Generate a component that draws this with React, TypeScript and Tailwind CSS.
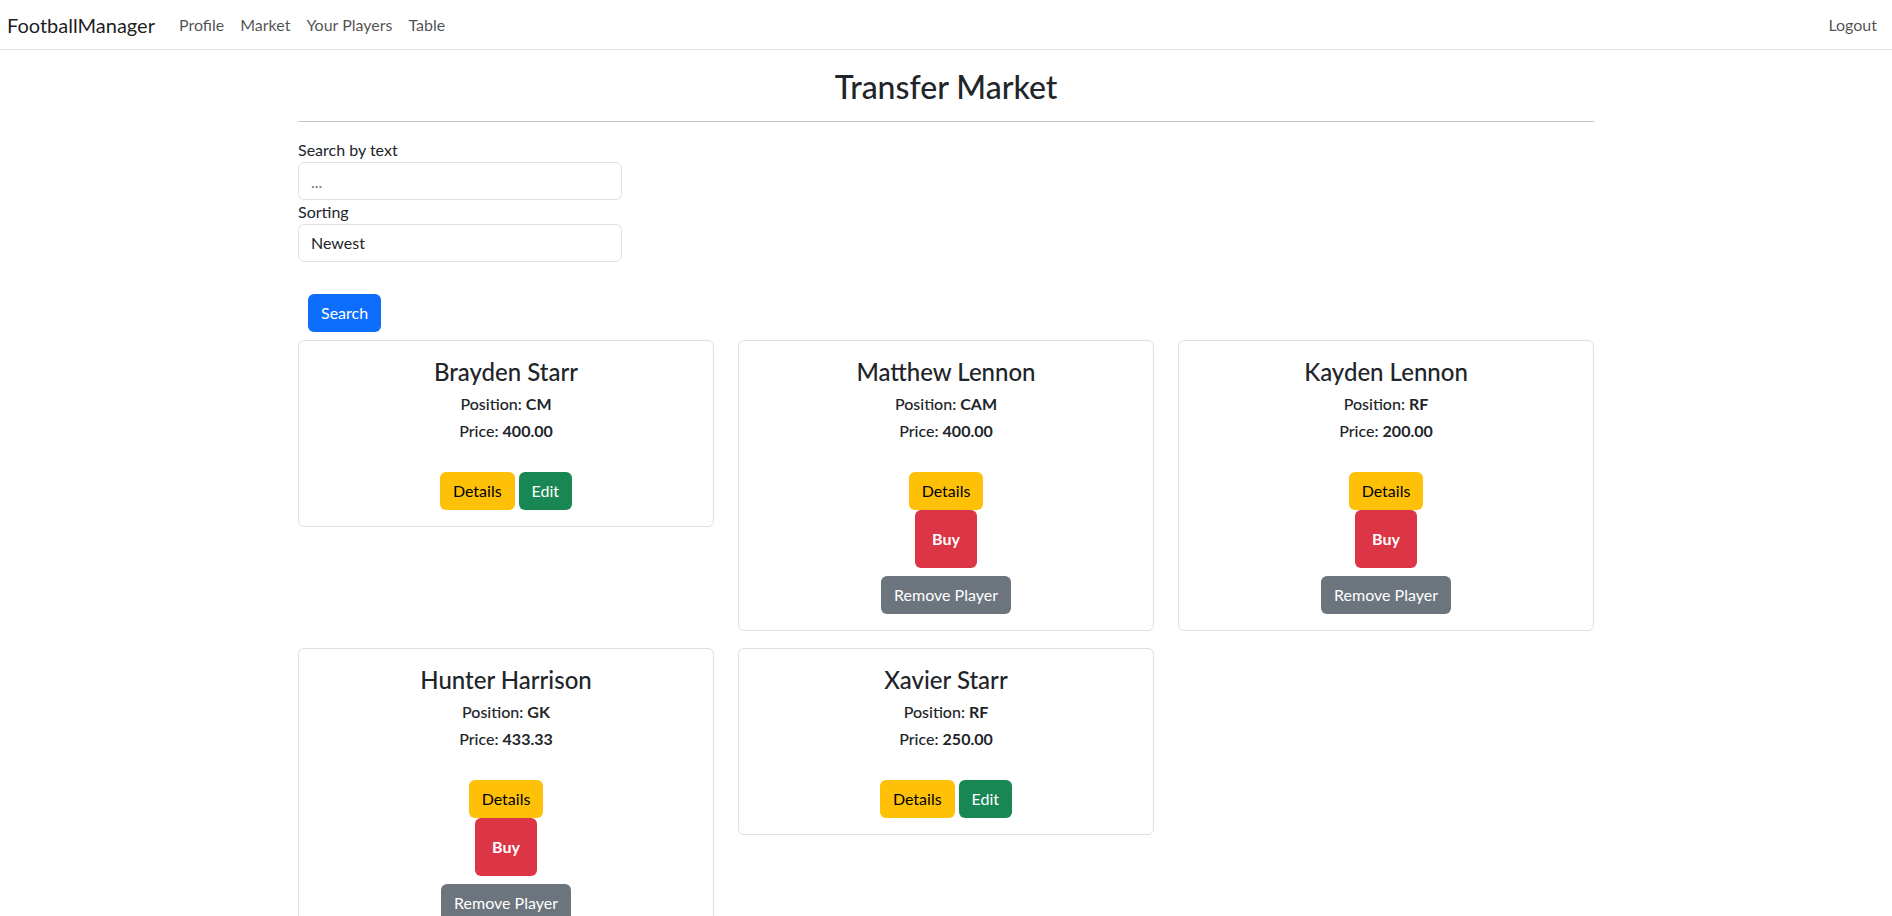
import React from 'react';

interface Player {
  name: string;
  position: string;
  price: string;
  owned: boolean;
}

const PLAYERS: Player[] = [
  { name: 'Brayden Starr', position: 'CM', price: '400.00', owned: true },
  { name: 'Matthew Lennon', position: 'CAM', price: '400.00', owned: false },
  { name: 'Kayden Lennon', position: 'RF', price: '200.00', owned: false },
  { name: 'Hunter Harrison', position: 'GK', price: '433.33', owned: false },
  { name: 'Xavier Starr', position: 'RF', price: '250.00', owned: true },
];

const btn = 'inline-block rounded-md border border-transparent px-3 py-1.5 text-[16px] leading-6';

const PlayerCard: React.FC<{ player: Player }> = ({ player }) => (
  <div className="rounded-md border border-[#dfe0e1] p-4 text-center">
    <h4 className="mb-2 text-[24px] font-medium leading-[29px] text-[#212529]">{player.name}</h4>
    <h6 className="mb-2 text-[16px] font-medium leading-[19px]">
      Position: <b className="font-bold">{player.position}</b>
    </h6>
    <h6 className="mb-2 text-[16px] font-medium leading-[19px]">
      Price: <b className="font-bold">{player.price}</b>
    </h6>
    <div className="h-6" />
    {player.owned ? (
      <div className="flex justify-center gap-1">
        <button className={`${btn} bg-[#ffc107] text-black`}>Details</button>
        <button className={`${btn} bg-[#198754] text-white`}>Edit</button>
      </div>
    ) : (
      <div className="flex flex-col items-center">
        <button className={`${btn} bg-[#ffc107] text-black`}>Details</button>
        <button className="rounded-md border border-transparent bg-[#dc3545] p-4 text-[16px] font-bold leading-6 text-white">
          Buy
        </button>
        <button className={`${btn} mt-2 bg-[#6c757d] text-white`}>Remove Player</button>
      </div>
    )}
  </div>
);

export default function App() {
  return (
    <div className="min-h-screen bg-white text-[16px] text-[#212529]" style={{ fontFamily: '"Segoe UI", Lato, "Noto Sans", sans-serif' }}>
      {/* Top navbar */}
      <nav className="flex h-[50px] items-center border-b border-[#dee2e6] pl-[7px] pr-[7px]">
        <a className="mr-4 text-[20px] leading-[30px] text-[rgba(0,0,0,0.9)]">FootballManager</a>
        <ul className="flex">
          {['Profile', 'Market', 'Your Players', 'Table'].map((l) => (
            <li key={l}>
              <a className="block px-2 leading-6 text-[rgba(0,0,0,0.7)]">{l}</a>
            </li>
          ))}
        </ul>
        <a className="ml-auto block px-2 leading-6 text-[rgba(0,0,0,0.7)]">Logout</a>
      </nav>

      <div className="mx-auto w-[1320px] px-3">
        <h2 className="mt-[18px] text-center text-[32px] font-medium leading-[38px]">Transfer Market</h2>
        <hr className="mb-4 mt-[15px] border-t border-[#c6c7c8]" />

        <label className="block leading-6">Search by text</label>
        <input
          placeholder="..."
          className="block h-[38px] w-1/4 rounded-md border border-[#dee2e6] px-3 leading-6 placeholder-[#6c757d] outline-none"
        />
        <label className="block leading-6">Sorting</label>
        <div className="flex h-[38px] w-1/4 items-center rounded-md border border-[#dee2e6] px-3 leading-6">Newest</div>

        <button className={`${btn} ml-[10px] mt-8 bg-[#0d6efd] text-white`}>Search</button>

        <div className="mt-2 grid grid-cols-3 items-start gap-x-6 gap-y-[17px]">
          {PLAYERS.map((p) => (
            <PlayerCard key={p.name} player={p} />
          ))}
        </div>
      </div>
    </div>
  );
}
